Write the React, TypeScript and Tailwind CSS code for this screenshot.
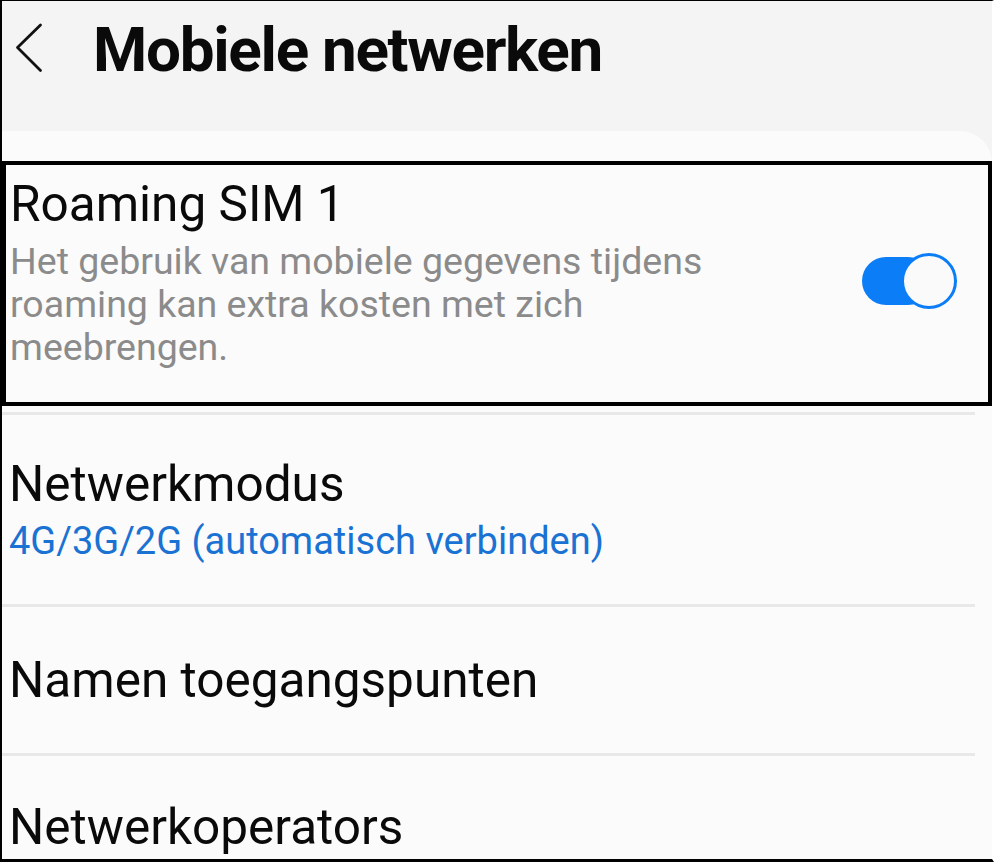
import React from "react";

function Chevron() {
  return (
    <svg width="30" height="52" viewBox="0 0 30 52" className="ml-[12px] mt-[21px] shrink-0">
      <path d="M26.5 3 L3.5 25.5 L26.5 48.5" fill="none" stroke="#111" strokeWidth="2.8" strokeLinecap="round" strokeLinejoin="round" />
    </svg>
  );
}

function Toggle() {
  return (
    <div className="relative w-[95px] h-[56px] shrink-0 mt-[77px] ml-auto">
      <div className="absolute left-0 top-[4px] h-[48px] w-[70px] rounded-full bg-[#0b7df7]" />
      <div className="absolute right-0 top-0 h-[56px] w-[56px] rounded-full border-[3px] border-[#0b7df7] bg-[#fafafa]" />
    </div>
  );
}

function Divider() {
  return <div className="h-[3px] bg-[#e8e8e8] mr-[17px]" />;
}

export default function App() {
  return (
    <div className="w-[994px] h-[862px] overflow-hidden bg-white font-['Roboto','Noto_Sans',sans-serif]">
      <div className="h-full border-l-2 border-t border-b-[3px] border-r-2 border-black border-r-white bg-[#f4f4f4] flex flex-col">
        <div className="h-[130px] shrink-0 flex items-start">
          <Chevron />
          <div className="ml-[49px] pt-[13px] text-[62px] leading-[72px] font-bold tracking-[-1.3px] text-[#0a0a0a]">
            Mobiele netwerken
          </div>
        </div>
        <div className="flex-1 bg-[#fbfbfb] rounded-tr-[32px] pt-[30px] flex flex-col">
          <div className="border-4 border-black flex pl-[4px] pr-[31px] pt-[11px] pb-[33px]">
            <div className="flex flex-col">
              <div className="text-[49.5px] leading-[56px] text-[#0a0a0a]">Roaming SIM 1</div>
              <div className="mt-[8px] text-[37.5px] leading-[43px] text-[#8b8b8b]">
                Het gebruik van mobiele gegevens tijdens
                <br />
                roaming kan extra kosten met zich
                <br />
                meebrengen.
              </div>
            </div>
            <Toggle />
          </div>
          <div className="mt-[6px]">
            <Divider />
          </div>
          <div className="pl-[7px] py-[41px] flex flex-col">
            <div className="text-[49.5px] leading-[56px] text-[#0a0a0a]">Netwerkmodus</div>
            <div className="mt-[8px] text-[38px] leading-[43px] text-[#1a72d3]">
              4G/3G/2G (automatisch verbinden)
            </div>
          </div>
          <Divider />
          <div className="pl-[7px] py-[45px]">
            <div className="text-[49.5px] leading-[56px] text-[#0a0a0a]">Namen toegangspunten</div>
          </div>
          <Divider />
          <div className="pl-[7px] pt-[43px]">
            <div className="text-[49.5px] leading-[56px] text-[#0a0a0a]">Netwerkoperators</div>
          </div>
        </div>
      </div>
    </div>
  );
}
